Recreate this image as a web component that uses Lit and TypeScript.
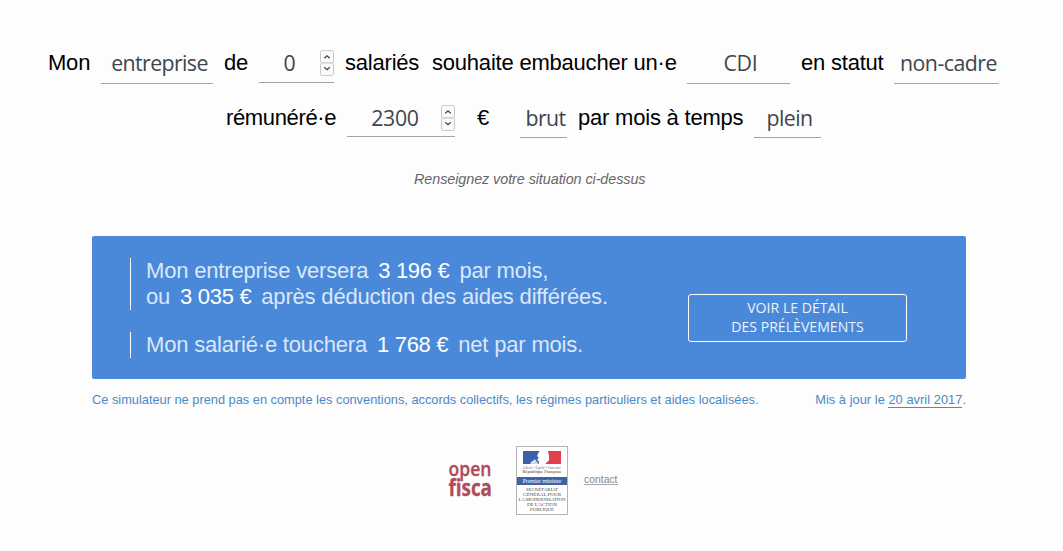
import { LitElement, html, css, svg } from "lit";
import { customElement } from "lit/decorators.js";

@customElement("number-stepper")
class NumberStepper extends LitElement {
  static styles = css`
    :host { display: block; width: 14px; height: 27px; }
    svg { display: block; }
  `;
  render() {
    return html`<svg width="14" height="27" viewBox="0 0 14 27" fill="none">
      <rect x=".5" y=".5" width="13" height="12.5" rx="2" fill="#fbfbfb" stroke="#c9c9c9" />
      <rect x=".5" y="13" width="13" height="12.5" rx="2" fill="#fbfbfb" stroke="#c9c9c9" />
      <path d="M4.300 8.300 7 5.800l2.700 2.500M4.300 17.200 7 19.700l2.700-2.500" stroke="#444" stroke-width="1.3" />
    </svg>`;
  }
}

@customElement("openfisca-logo")
class OpenfiscaLogo extends LitElement {
  static styles = css`
    :host { display: block; width: 44px; height: 38px; }
    svg { display: block; overflow: visible; }
    text { font-family: "Open Sans", "Noto Sans", sans-serif; font-weight: 600; fill: #b04a5c; stroke: #b04a5c; stroke-width: .3px; }
    .heavy { font-weight: 700; }
  `;
  render() {
    return html`<svg width="44" height="38" viewBox="0 0 44 38">
      <text x="0.500" y="14.500" font-size="19" textLength="43" lengthAdjust="spacingAndGlyphs">open</text>
      <text class="heavy" x="0.500" y="34.500" font-size="22.500" textLength="43.500" lengthAdjust="spacingAndGlyphs">fisca</text>
    </svg>`;
  }
}

@customElement("ministry-logo")
class MinistryLogo extends LitElement {
  static styles = css`
    :host { display: block; width: 52px; height: 69px; }
    svg { display: block; }
    text { font-family: "Liberation Serif", serif; text-anchor: middle; }
  `;
  render() {
    const lines: [string, number][] = [
      ["SECRÉTARIAT", 32], ["GÉNÉRAL POUR", 38], ["LA MODERNISATION", 47], ["DE L'ACTION", 30], ["PUBLIQUE", 24],
    ];
    return html`<svg width="52" height="69" viewBox="0 0 52 69">
      <rect x=".5" y=".5" width="51" height="68" fill="#fff" stroke="#b4b4b4" />
      <path d="M7 5h16.500c-1 2-2.500 3.500-2 5.500l1.500 1.500-2 1 2 3v2H7z" fill="#3b62a8" />
      <path d="M32 5h13v13H29.500c1-2.500 4-2.500 3.500-5 .5-3-.5-5-1-8z" fill="#e2404a" />
      <path d="M14 18c1-2.500 3-4 5.500-4l2 2.500 1.500 1.500z" fill="#c9d5ea" />
      <path d="M18 13.500l2 1.500M16 16h3" stroke="#fff" stroke-width=".8" />
      <text x="26" y="22.800" font-size="3.600" fill="#777" textLength="38">Liberté • Égalité • Fraternité</text>
      <text x="26" y="27" font-size="4.200" fill="#333" textLength="39" lengthAdjust="spacingAndGlyphs">République Française</text>
      <rect x="1" y="31" width="50" height="8" fill="#4063a8" />
      <text x="26" y="37" font-size="6.500" fill="#e9eef8" textLength="39">Premier ministre</text>
      ${lines.map(([t, w], i) => svg`<text x="26" y=${45.2 + i * 5} font-size="4.800" fill="#444" textLength=${w} lengthAdjust="spacingAndGlyphs">${t}</text>`)}
    </svg>`;
  }
}

@customElement("app-root")
class AppRoot extends LitElement {
  static styles = css`
    :host {
      display: block; box-sizing: border-box; width: 1063px; height: 551px; overflow: hidden;
      background: #fdfdfd; color: #000; font-family: "Liberation Sans", Arial, sans-serif;
    }
    .row { display: flex; white-space: pre; font-size: 22px; letter-spacing: -0.21px; line-height: 26px; }
    .first { padding: 50px 0 0 48px; height: 34px; }
    .second { padding: 21px 0 0 226px; height: 34px; }
    .label { flex: none; }
    .field {
      flex: none; box-sizing: border-box; height: 34px; border-bottom: 1px solid #a3a3a3;
      font-family: "Open Sans", "Noto Sans", sans-serif; font-size: 21.3px; letter-spacing: -0.6px; line-height: 25px;
      color: #3d464d; text-align: center; display: flex; justify-content: center;
    }
    .number { height: 33px; justify-content: flex-end; letter-spacing: -0.3px; }
    .second .field { height: 33px; }
    .second .number { height: 32px; }
    .f-ent { width: 112px; padding-left: 5px; }
    .w-mon { width: 53px; }
    .w-de { width: 35px; margin-left: 11px; }
    .f-num { width: 75px; }
    .f-num .val { width: 13px; margin-right: 24px; }
    .w-sal { width: 87px; margin-left: 11px; }
    .w-souh { width: 255px; }
    .f-cdi { width: 103px; padding-left: 4px; letter-spacing: -0.2px; }
    .w-stat { width: 93px; margin-left: 11px; }
    .f-cadre { width: 105px; padding-left: 4px; letter-spacing: -0.5px; }
    .w-rem { width: 121px; letter-spacing: -0.35px; }
    .f-pay { width: 108px; }
    .f-pay .val { width: 48px; margin-right: 22px; }
    .w-eur { width: 43px; margin-left: 22px; }
    .f-brut { width: 47px; padding-left: 4px; }
    .w-par { width: 176px; margin-left: 11px; }
    .f-plein { width: 67px; padding-left: 4px; }
    .hint {
      margin: 32px 0 0 414px; font-size: 14.4px; letter-spacing: -0.08px; line-height: 16px;
      font-style: italic; color: #666;
    }
    .panel {
      display: flex; box-sizing: border-box; margin: 49px 0 0 92px; width: 874px; height: 143px;
      padding: 22px 59px 0 38px; background: #4a89da; border-radius: 2px; justify-content: space-between;
    }
    .result {
      border-left: 1px solid #fff; padding-left: 15px; margin-bottom: 22px; white-space: pre;
      font-size: 22px; letter-spacing: -0.18px; line-height: 26px; color: #dbe7f8;
    }
    .result b { font-weight: 400; color: #fff; margin: 0 4px; letter-spacing: -0.3px; }
    .button {
      box-sizing: border-box; width: 219px; height: 48px; margin-top: 36px; padding: 3px 0;
      border: 1px solid #fff; border-radius: 3px; text-align: center; color: #edf3fc;
      font-family: "Open Sans", "Noto Sans", sans-serif; font-size: 14.1px; line-height: 19px;
    }
    .notes {
      display: flex; justify-content: space-between; margin: 13px 97px 0 92px; white-space: pre;
      font-size: 12.8px; line-height: 16px; color: #4a89ca;
    }
    .updated { letter-spacing: 0.05px; }
    .notes u { text-decoration: none; border-bottom: 1px solid #4a89ca; }
    .footer { display: flex; padding: 38px 0 0 448px; }
    .footer openfisca-logo { margin-top: 15px; }
    .footer ministry-logo { margin-left: 24px; }
    .contact {
      margin: 28px 0 0 16px; height: 10px; font-size: 10.4px; line-height: 12px; color: #888;
      border-bottom: 1px solid #aaa;
    }
  `;
  render() {
    return html`
      <div class="row first">
        <span class="label w-mon">Mon</span><span class="field f-ent">entreprise</span>
        <span class="label w-de">de</span><span class="field number f-num"><span class="val">0</span><number-stepper></number-stepper></span>
        <span class="label w-sal">salariés</span><span class="label w-souh">souhaite embaucher un·e</span>
        <span class="field f-cdi">CDI</span><span class="label w-stat">en statut</span><span class="field f-cadre">non-cadre</span>
      </div>
      <div class="row second">
        <span class="label w-rem">rémunéré·e</span><span class="field number f-pay"><span class="val">2300</span><number-stepper></number-stepper></span>
        <span class="label w-eur">€</span><span class="field f-brut">brut</span>
        <span class="label w-par">par mois à temps</span><span class="field f-plein">plein</span>
      </div>
      <div class="hint">Renseignez votre situation ci-dessus</div>
      <div class="panel">
        <div>
          <div class="result">Mon entreprise versera <b>3 196 €</b> par mois,<br />ou <b>3 035 €</b> après déduction des aides différées.</div>
          <div class="result">Mon salarié·e touchera <b>1 768 €</b> net par mois.</div>
        </div>
        <div class="button">VOIR LE DÉTAIL<br />DES PRÉLÈVEMENTS</div>
      </div>
      <div class="notes">
        <span>Ce simulateur ne prend pas en compte les conventions, accords collectifs, les régimes particuliers et aides localisées.</span>
        <span class="updated">Mis à jour le <u>20 avril 2017</u>.</span>
      </div>
      <div class="footer">
        <openfisca-logo></openfisca-logo><ministry-logo></ministry-logo><span class="contact">contact</span>
      </div>`;
  }
}
